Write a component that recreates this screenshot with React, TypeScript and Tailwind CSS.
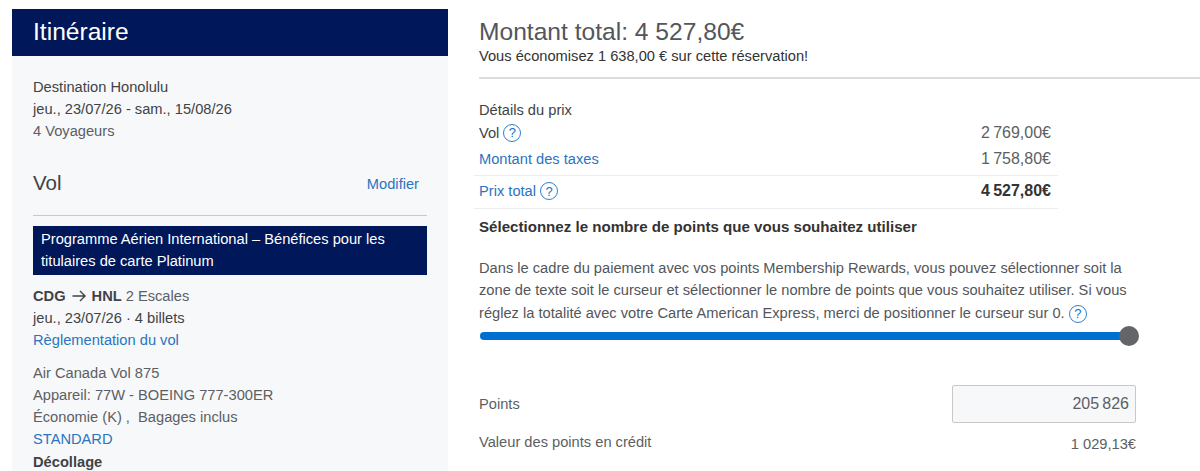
import React from "react";

const font = { fontFamily: '"Liberation Sans", Arial, sans-serif' };

function Help() {
  return (
    <span className="inline-flex h-[18px] w-[18px] items-center justify-center rounded-full border border-[#2f80cf] text-[13px] leading-none text-[#1b6fc2] align-middle">
      ?
    </span>
  );
}

export default function App() {
  return (
    <div style={font} className="flex h-[471px] w-[1200px] overflow-hidden bg-white pl-3 pt-[9px] text-[14.67px] text-[#5c5f63]">
      <aside className="h-[600px] w-[436px] shrink-0 bg-[#f7f8f9]">
        <div className="flex h-[47px] items-center bg-[#00175a] pl-[21px] text-[24.6px] text-white">Itinéraire</div>
        <div className="px-[21px] pt-[20px]">
          <div className="leading-[22px] text-[#404346]">Destination Honolulu</div>
          <div className="leading-[23px] text-[#404346]">jeu., 23/07/26 - sam., 15/08/26</div>
          <div className="leading-[21px]">4 Voyageurs</div>
          <div className="mt-[27px] flex h-[30px] items-center justify-between pr-[8px]">
            <span className="mb-[2px] text-[20.5px] text-[#404346]">Vol</span>
            <span className="text-[#2a74c0]">Modifier</span>
          </div>
          <div className="mt-[16px] border-t border-[#c8c9c7]" />
          <div className="mt-[10px] bg-[#00175a] px-2 pb-[3px] pt-[2px] leading-[22px] text-white">
            Programme Aérien International – Bénéfices pour les titulaires de carte Platinum
          </div>
          <div className="mt-[10px] flex items-center leading-[22px]">
            <b className="text-[#404346]">CDG</b>
            <svg width="14" height="12" viewBox="0 0 14 12" className="mx-[6px]" fill="none" stroke="#404346" strokeWidth="1.4">
              <path d="M0.5 6H13M8 1l5 5-5 5" />
            </svg>
            <b className="text-[#404346]">HNL</b>
            <span className="ml-[4px]">2 Escales</span>
          </div>
          <div className="leading-[22px] text-[#404346]">jeu., 23/07/26 · 4 billets</div>
          <div className="leading-[22px] text-[#2a74c0]">Règlementation du vol</div>
          <div className="mt-[11px] leading-[22px]">Air Canada Vol 875</div>
          <div className="leading-[22px]">Appareil: 77W - BOEING 777-300ER</div>
          <div className="leading-[22px]">Économie (K) ,&nbsp; Bagages inclus</div>
          <div className="leading-[22px] text-[#2a74c0]">STANDARD</div>
          <div className="mt-px font-bold leading-[22px] text-[#404346]">Décollage</div>
        </div>
      </aside>

      <main className="ml-[31px] flex-1 pt-[9px]">
        <h1 className="text-[24.6px] leading-[28px] text-[#53565a]">Montant total: 4 527,80€</h1>
        <p className="leading-[20px] text-[#333333]">Vous économisez 1 638,00 € sur cette réservation!</p>
        <div className="mt-[11px] h-[2px] bg-[#dcdcdc]" />

        <div className="mt-[21px] leading-[20px] text-[#404346]">Détails du prix</div>
        <div className="-ml-[5px] w-[584px]">
          <div className="flex h-[25px] items-center justify-between pl-[5px] pr-[7px]">
            <span className="flex items-center gap-[4px] text-[#404346]">Vol <Help /></span>
            <span className="text-[16px]">2{"\u2009"}769,00€</span>
          </div>
          <div className="flex h-[31px] items-center justify-between border-b border-[#ecedee] pb-[2px] pl-[5px] pr-[7px]">
            <span className="text-[#2a74c0]">Montant des taxes</span>
            <span className="text-[16px]">1{"\u2009"}758,80€</span>
          </div>
          <div className="flex h-[33px] items-center justify-between border-b border-[#ecedee] pb-[2px] pl-[5px] pr-[7px]">
            <span className="flex items-center gap-[4px] text-[#2a74c0]">Prix total <Help /></span>
            <b className="text-[16px] text-[#333333]">4{"\u2009"}527,80€</b>
          </div>
        </div>

        <h2 className="mt-[8px] text-[15.1px] font-bold leading-[20px] text-[#333333]">Sélectionnez le nombre de points que vous souhaitez utiliser</h2>
        <p className="mt-[20px] w-[656px] leading-[22.4px] text-[#53565a]">
          Dans le cadre du paiement avec vos points Membership Rewards, vous pouvez sélectionner soit la zone de texte soit le curseur et sélectionner le nombre de points que vous souhaitez utiliser. Si vous réglez la totalité avec votre Carte American Express, merci de positionner le curseur sur 0. <Help />
        </p>

        <div className="relative ml-px mt-[8px] h-[8px] w-[650px] rounded-full bg-[#006fcf]">
          <div className="absolute -right-[9px] -top-[6px] h-[20px] w-[20px] rounded-full bg-[#636569]" />
        </div>

        <div className="mt-[45px] flex h-[38px] w-[657px] items-center justify-between">
          <span>Points</span>
          <div className="flex h-[38px] w-[184px] items-center justify-end rounded-[2px] border border-[#c8c9c7] bg-[#f7f8f9] pr-[6px] text-[16px]">205{"\u2009"}826</div>
        </div>
        <div className="mt-[9px] flex w-[657px] items-center justify-between leading-[20px]">
          <span>Valeur des points en crédit</span>
          <span className="relative top-[2px]">1 029,13€</span>
        </div>
      </main>
    </div>
  );
}
